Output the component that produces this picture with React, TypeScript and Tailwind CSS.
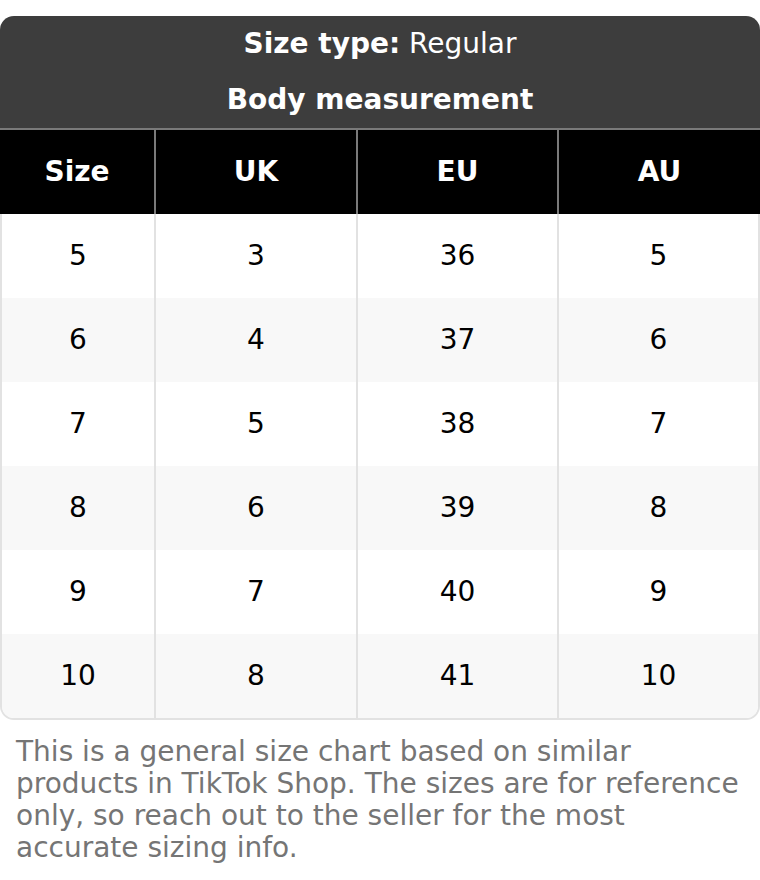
import React from "react";

const rows = [
  ["5", "3", "36", "5"],
  ["6", "4", "37", "6"],
  ["7", "5", "38", "7"],
  ["8", "6", "39", "8"],
  ["9", "7", "40", "9"],
  ["10", "8", "41", "10"],
];

const heads = ["Size", "UK", "EU", "AU"];

export default function App() {
  return (
    <div className="w-[760px] h-[880px] bg-white pt-4 font-['DejaVu_Sans',sans-serif] text-[28px] leading-8">
      <div className="rounded-t-[14px] overflow-hidden bg-[#3d3d3d] text-white text-center border-b-2 border-[#7a7a7a]">
        <div className="py-3">
          <span className="font-bold">Size type:</span> Regular
        </div>
        <div className="py-3 font-bold">Body measurement</div>
      </div>

      <div className="grid grid-cols-[154px_202px_201px_1fr] bg-black text-white font-bold">
        {heads.map((h, i) => (
          <div
            key={h}
            className={`h-[84px] flex items-center justify-center ${i > 0 ? "border-l-2 border-[#7a7a7a]" : ""}`}
          >
            {h}
          </div>
        ))}
      </div>

      <div className="border-x-2 border-b-2 border-[#e2e2e2] rounded-b-[14px] overflow-hidden">
        {rows.map((r, ri) => (
          <div
            key={ri}
            className={`grid grid-cols-[152px_202px_201px_1fr] text-black ${ri % 2 === 1 ? "bg-[#f8f8f8]" : "bg-white"}`}
          >
            {r.map((v, ci) => (
              <div
                key={ci}
                className={`h-[84px] flex items-center justify-center ${ci > 0 ? "border-l-2 border-[#e2e2e2]" : ""}`}
              >
                {v}
              </div>
            ))}
          </div>
        ))}
      </div>

      <p className="mt-4 px-4 text-[#757575]">
        This is a general size chart based on similar products in TikTok Shop. The sizes are for reference only, so reach out to the seller for the most accurate sizing info.
      </p>
    </div>
  );
}
